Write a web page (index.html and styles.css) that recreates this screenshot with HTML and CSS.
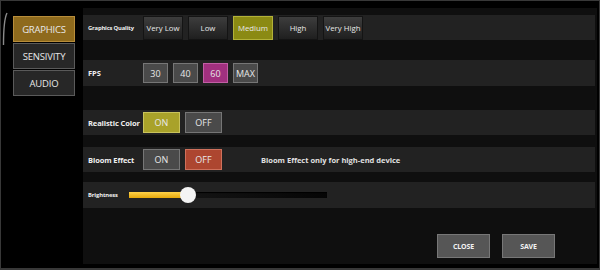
FILE: index.html
```html
<!DOCTYPE html>
<html lang="en">
<head>
    <meta charset="UTF-8">
    <title>Settings</title>
    <link rel="stylesheet" href="styles.css">
</head>
<body>
<div class="window">

    <!-- left tab column -->
    <aside class="sidebar">
        <svg class="scroll-arc" width="6" height="34" viewBox="0 0 6 34">
            <path d="M5 1 C2.5 6 1.5 14 1.5 33" fill="none" stroke="#8a8a8a" stroke-width="1.4"/>
        </svg>
        <nav class="tabs">
            <div class="tab tab-active">GRAPHICS</div>
            <div class="tab">SENSIVITY</div>
            <div class="tab">AUDIO</div>
        </nav>
    </aside>

    <!-- settings panel -->
    <main class="panel">
        <div class="row row-quality">
            <span class="label label-tiny">Graphics Quality</span>
            <div class="options">
                <button class="quality">Very Low</button>
                <button class="quality">Low</button>
                <button class="quality quality-on">Medium</button>
                <button class="quality">High</button>
                <button class="quality">Very High</button>
            </div>
        </div>

        <div class="row row-fps">
            <span class="label">FPS</span>
            <div class="options">
                <button class="fps">30</button>
                <button class="fps">40</button>
                <button class="fps fps-on">60</button>
                <button class="fps">MAX</button>
            </div>
        </div>

        <div class="row row-color">
            <span class="label">Realistic Color</span>
            <div class="options">
                <button class="toggle toggle-on">ON</button>
                <button class="toggle">OFF</button>
            </div>
        </div>

        <div class="row row-bloom">
            <span class="label">Bloom Effect</span>
            <div class="options">
                <button class="toggle">ON</button>
                <button class="toggle toggle-off">OFF</button>
            </div>
            <span class="note">Bloom Effect only for high-end device</span>
        </div>

        <div class="row row-brightness">
            <span class="label label-small">Brightness</span>
            <div class="slider">
                <div class="slider-fill"></div>
                <div class="slider-thumb"></div>
            </div>
        </div>

        <div class="footer">
            <button class="action">CLOSE</button>
            <button class="action">SAVE</button>
        </div>
    </main>
</div>
</body>
</html>
```

FILE: styles.css
```css
body {
    margin: 0;
    background-color: black;
    font-family: "Open Sans", "DejaVu Sans", sans-serif;
    color: #e6e6e6;
}

.window {
    box-sizing: border-box;
    width: 600px;
    height: 270px;
    display: flex;
    border: 1px solid #383838;
    border-bottom-width: 2px;
    background-color: black;
}

/* left column */
.sidebar {
    width: 82px;
    display: flex;
    padding-left: 1px;
    box-sizing: border-box;
}

.scroll-arc {
    margin-top: 11px;
}

.tabs {
    margin-left: 5px;
    margin-top: 15px;
    display: flex;
    flex-direction: column;
    gap: 1px;
}

.tab {
    box-sizing: border-box;
    width: 62px;
    height: 26px;
    display: flex;
    align-items: center;
    justify-content: center;
    font-size: 9.5px;
    letter-spacing: -0.2px;
    color: #e8e8e8;
    background-color: #272727;
    border: 1px solid #5a5a5a;
}

.tab-active {
    background-color: #8e6a1d;
    border-color: #b88d3a;
}

/* right panel */
.panel {
    width: 514px;
    height: 256px;
    margin-top: 7px;
    background-color: #0f0f0f;
    display: flex;
    flex-direction: column;
}

.row {
    box-sizing: border-box;
    width: 512px;
    height: 25px;
    display: flex;
    align-items: center;
    padding-left: 5px;
    background-color: #222222;
}

.row-quality {
    margin-top: 7px;
}

.row-fps {
    margin-top: 20px;
    height: 26px;
}

.row-color {
    margin-top: 24px;
}

.row-bloom {
    margin-top: 12px;
}

.row-brightness {
    margin-top: 10px;
    height: 26px;
}

.label {
    width: 55px;
    font-size: 7.5px;
    font-weight: bold;
    letter-spacing: -0.1px;
    color: #f0f0f0;
    white-space: nowrap;
}

.label-tiny {
    font-size: 5.8px;
    letter-spacing: -0.15px;
}

.label-small {
    width: 41px;
    font-size: 5.8px;
}

.options {
    display: flex;
    gap: 5px;
}

button {
    box-sizing: border-box;
    padding: 0;
    font-family: inherit;
    color: #e8e8e8;
    cursor: pointer;
}

.quality {
    width: 40px;
    height: 24px;
    font-size: 7.8px;
    background: linear-gradient(#3d3d3d, #1f1f1f);
    border: 1px solid #141414;
}

.quality-on {
    background: #8b8a13;
    border-color: #b3b238;
}

.fps {
    width: 25px;
    height: 20px;
    font-size: 9px;
    background-color: #4a4a4a;
    border: 1px solid #767676;
}

.fps-on {
    background-color: #a1307f;
    border-color: #c15ea4;
}

.toggle {
    width: 37px;
    height: 21px;
    font-size: 9px;
    background-color: #4a4a4a;
    border: 1px solid #767676;
}

.toggle-on {
    background-color: #a9a22a;
    border-color: #c9c35c;
}

.toggle-off {
    background-color: #ad4630;
    border-color: #cf715c;
}

.note {
    margin-left: 39px;
    font-size: 7.5px;
    font-weight: bold;
    color: #e0e0e0;
}

/* brightness slider */
.slider {
    position: relative;
    width: 198px;
    height: 6px;
    background: linear-gradient(to right, #1a1a1a, #050505);
    box-shadow: inset 0 1px 1px black;
}

.slider-fill {
    width: 56px;
    height: 100%;
    background: linear-gradient(#ffd24a, #e6a80a);
}

.slider-thumb {
    position: absolute;
    left: 51px;
    top: -5px;
    width: 16px;
    height: 16px;
    border-radius: 50%;
    background-color: #f4f4f4;
}

.footer {
    display: flex;
    justify-content: flex-end;
    gap: 12px;
    margin-top: 26px;
    padding-right: 42px;
}

.action {
    width: 53px;
    height: 24px;
    font-size: 7px;
    font-weight: bold;
    letter-spacing: -0.2px;
    background-color: #565656;
    border: 1px solid #777777;
    color: #f2f2f2;
}
```
